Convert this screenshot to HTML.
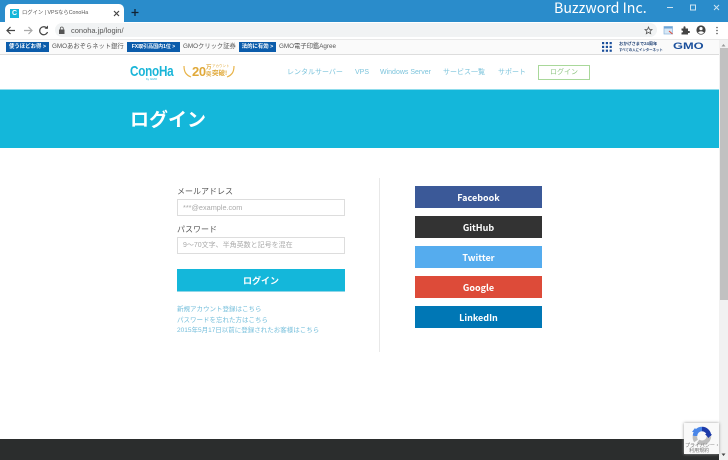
<!DOCTYPE html>
<html lang="ja">
<head>
<meta charset="utf-8">
<title>ログイン | VPSならConoHa</title>
<style>
html,body{margin:0;padding:0;width:728px;height:460px;overflow:hidden;background:#fff}
body{position:relative;font-family:"Liberation Sans","Noto Sans CJK JP",sans-serif}
.a{position:absolute;white-space:nowrap}
.b{position:absolute}
.bk{position:absolute;top:42px;height:10px;background:#0b5cab;color:#fff;font-size:5.400px;line-height:10px;text-align:center;font-weight:bold;white-space:nowrap;overflow:hidden}
.bt{position:absolute;top:41px;font-size:6.300px;line-height:12px;color:#555;white-space:nowrap}
.nav{position:absolute;top:67px;font-size:7px;line-height:12px;color:#7cc4dc;white-space:nowrap}
.sb{position:absolute;left:415px;width:127px;height:22px;color:#fff;font:bold 9px/24px "Noto Sans CJK JP",sans-serif;text-align:center}
.lb{position:absolute;left:177px;font-size:8px;line-height:12px;color:#555;white-space:nowrap}
.inp{position:absolute;left:177px;width:166px;height:15px;border:1px solid #ddd;background:#fff;line-height:15px;color:#aaa;text-indent:5px;white-space:nowrap;overflow:hidden}
.lk{position:absolute;left:177px;font-size:6.500px;line-height:10px;color:#73bedb;white-space:nowrap}
</style>
</head>
<body>
<!-- browser chrome -->
<div class="b" style="left:0;top:0;width:728px;height:22px;background:#2a8ccb"></div>
<div class="b" style="left:5px;top:4px;width:119px;height:18px;background:#fff;border-radius:5px 5px 0 0"></div>
<div class="b" style="left:10px;top:9px;width:9px;height:9px;background:#14b7da"></div>
<div class="a" style="left:12px;top:9px;color:#fff;font:bold 7px/9px 'Liberation Sans',sans-serif">C</div>
<div class="a" style="left:22px;top:8px;font-size:5.300px;line-height:10px;color:#555">ログイン | VPSならConoHa</div>
<svg class="b" style="left:112px;top:9px" width="10" height="10"><path d="M2 2l5 5M7 2l-5 5" stroke="#444" stroke-width="1.200"/></svg>
<svg class="b" style="left:130px;top:8px" width="10" height="10"><path d="M5 1v7M1.500 4.500h7" stroke="#123" stroke-width="1.300"/></svg>
<div class="a" style="left:554px;top:-1px;color:#fff;font-family:'Noto Sans CJK JP',sans-serif;font-size:14.200px;line-height:18px">Buzzword Inc.</div>
<svg class="b" style="left:664px;top:0" width="64" height="16"><path d="M3 7.500h6" stroke="#cfe4f2" stroke-width="1"/><rect x="26.500" y="5" width="5" height="5" fill="none" stroke="#cfe4f2"/><path d="M50 5l5 5M55 5l-5 5" stroke="#cfe4f2"/></svg>

<div class="b" style="left:0;top:22px;width:728px;height:17px;background:#fff"></div>
<svg class="b" style="left:4px;top:24px" width="50" height="14"><g fill="none" stroke-width="1.200"><path d="M3 6.500h8M6.500 3L3 6.500 6.500 10" stroke="#444"/><path d="M20 6.500h8M24.500 3L28 6.500 24.500 10" stroke="#aaa"/><path d="M43 4.500A4 4 0 1 0 43.500 8" stroke="#444"/></g><path d="M40.500 4.800h3.500V1.500z" fill="#444"/></svg>
<div class="b" style="left:55px;top:23px;width:602px;height:14px;background:#f1f3f4;border-radius:7px"></div>
<svg class="b" style="left:58px;top:26px" width="8" height="9"><rect x="1" y="3.500" width="5.500" height="4.500" fill="#555"/><path d="M2.300 3.500V2.500a1.500 1.500 0 0 1 3 0v1" fill="none" stroke="#555" stroke-width=".8"/></svg>
<div class="a" style="left:71px;top:25px;font-size:7.500px;line-height:11px;color:#555">conoha.jp/login/</div>
<svg class="b" style="left:644px;top:26px" width="9" height="9"><path d="M4.500 1l1 2.400 2.500.2-1.900 1.600.6 2.500-2.200-1.300-2.200 1.300.6-2.500L1 3.600l2.500-.2z" fill="none" stroke="#555" stroke-width=".8"/></svg>
<svg class="b" style="left:663px;top:25px" width="11" height="11"><rect x="1" y="1.500" width="8.500" height="7.500" fill="#d8e8f6" stroke="#8ab4dc" stroke-width=".7"/><rect x="1" y="1.500" width="8.500" height="2" fill="#6ea5d8"/><path d="M6 6l3.500 3" stroke="#e0503c" stroke-width="1.100"/></svg>
<svg class="b" style="left:680px;top:25px" width="10" height="10"><path d="M1.500 3.500h2V2.300a1 1 0 0 1 2 0v1.200h2.500V6h1a1 1 0 0 1 0 2h-1v1.500H1.500V7.500h.5a1 1 0 0 0 0-2h-.5z" fill="#444"/></svg>
<svg class="b" style="left:695px;top:24px" width="12" height="12"><circle cx="6" cy="6" r="4.600" fill="#444"/><circle cx="6" cy="4.600" r="1.600" fill="#fff"/><path d="M3 8.500a3.400 2.400 0 0 1 6 0 3.800 3.800 0 0 1-6 0z" fill="#fff"/></svg>
<svg class="b" style="left:715px;top:26px" width="4" height="9"><g fill="#555"><circle cx="2" cy="1.500" r=".8"/><circle cx="2" cy="4.500" r=".8"/><circle cx="2" cy="7.500" r=".8"/></g></svg>

<!-- GMO bar -->
<div class="b" style="left:0;top:39px;width:728px;height:16px;background:#fafafa;border-top:1px solid #e8e8e8;border-bottom:1px solid #ddd;box-sizing:border-box"></div>
<div class="bk" style="left:6px;width:43px">使うほどお得 &gt;</div>
<div class="bt" style="left:52px">GMOあおぞらネット銀行</div>
<div class="bk" style="left:127px;width:53px;font-size:5px">FX取引高国内1位 &gt;</div>
<div class="bt" style="left:183px">GMOクリック証券</div>
<div class="bk" style="left:239px;width:37px">法的に有効 &gt;</div>
<div class="bt" style="left:279px">GMO電子印鑑Agree</div>
<svg class="b" style="left:602px;top:42px" width="10" height="10"><g fill="#1a4f9c"><rect x="0" y="0" width="2.200" height="2.200"/><rect x="3.800" y="0" width="2.200" height="2.200"/><rect x="7.600" y="0" width="2.200" height="2.200"/><rect x="0" y="3.800" width="2.200" height="2.200"/><rect x="3.800" y="3.800" width="2.200" height="2.200"/><rect x="7.600" y="3.800" width="2.200" height="2.200"/><rect x="0" y="7.600" width="2.200" height="2.200"/><rect x="3.800" y="7.600" width="2.200" height="2.200"/><rect x="7.600" y="7.600" width="2.200" height="2.200"/></g></svg>
<div class="a" style="left:619px;top:41px;font-size:4.200px;line-height:6px;color:#1d3f73;font-weight:bold">おかげさまで24周年</div>
<div class="a" style="left:619px;top:47px;font-size:3.400px;line-height:6px;color:#1d3f73;font-weight:bold">すべての人にインターネット</div>
<div class="a" style="left:673px;top:41px;font-size:9.500px;line-height:12px;color:#1a4f9c;font-weight:bold;transform:scaleX(1.350);transform-origin:left">GMO</div>

<!-- header -->
<div class="a" style="left:130px;top:62px;font-size:15px;line-height:20px;color:#19b5d8;font-weight:bold;letter-spacing:-.3px;transform:scaleX(.78);transform-origin:left">ConoHa</div>
<div class="a" style="left:146px;top:77px;font-size:3px;line-height:4px;color:#19b5d8">by GMO</div>
<svg class="b" style="left:183px;top:64px" width="52" height="16"><g fill="none" stroke="#e8b44a" stroke-width="1.200"><path d="M1 2c0 6 2 9 7 11"/><path d="M51 2c0 6-2 9-7 11"/></g></svg>
<div class="a" style="left:192px;top:64px;font-size:13px;line-height:15px;color:#e0a93a;font-weight:bold;letter-spacing:-.3px">20</div>
<div class="a" style="left:206px;top:65px;font-size:5.500px;line-height:6.500px;color:#e0a93a;font-weight:bold">万<br>突</div>
<div class="a" style="left:212px;top:64px;font-size:3.500px;line-height:5px;color:#e0a93a">アカウント</div>
<div class="a" style="left:212px;top:70px;font-size:6.500px;line-height:8px;color:#e0a93a;font-weight:bold">突破!</div>
<div class="nav" style="left:287px">レンタルサーバー</div>
<div class="nav" style="left:355px">VPS</div>
<div class="nav" style="left:380px">Windows Server</div>
<div class="nav" style="left:443px">サービス一覧</div>
<div class="nav" style="left:498px">サポート</div>
<div class="a" style="left:538px;top:65px;width:50px;height:13px;border:1px solid #a9d89a;font-size:7px;line-height:14px;text-align:center;color:#8fc583">ログイン</div>

<!-- hero -->
<div class="b" style="left:0;top:89px;width:719px;height:59px;background:#14b7da;border-top:1px solid #8fdcec;box-sizing:border-box"></div>
<div class="a" style="left:130px;top:108px;font-size:19px;line-height:25px;color:#fff;font-weight:bold">ログイン</div>

<!-- form -->
<div class="lb" style="left:177px;top:186px">メールアドレス</div>
<div class="inp" style="top:199px;font-size:7.300px">***@example.com</div>
<div class="lb" style="top:224px">パスワード</div>
<div class="inp" style="top:237px;font-size:7px">9～70文字、半角英数と記号を混在</div>
<div class="b" style="left:177px;top:269px;width:168px;height:22px;background:#14b7da;border-bottom:1px solid #8fd6e8"></div>
<div class="a" style="left:177px;top:274px;width:168px;text-align:center;color:#fff;font-size:9px;line-height:14px;font-weight:bold">ログイン</div>
<div class="lk" style="top:305px">新規アカウント登録はこちら</div>
<div class="lk" style="top:316px">パスワードを忘れた方はこちら</div>
<div class="lk" style="top:326px">2015年5月17日以前に登録されたお客様はこちら</div>
<div class="b" style="left:379px;top:178px;width:1px;height:174px;background:#e8e8e8"></div>

<!-- social -->
<div class="sb" style="top:186px;background:#3b5998">Facebook</div>
<div class="sb" style="top:216px;background:#333">GitHub</div>
<div class="sb" style="top:246px;background:#55acee">Twitter</div>
<div class="sb" style="top:276px;background:#dd4b39">Google</div>
<div class="sb" style="top:306px;background:#0077b5">LinkedIn</div>

<!-- footer -->
<div class="b" style="left:0;top:439px;width:719px;height:21px;background:#2b2d2d"></div>

<!-- scrollbar -->
<div class="b" style="left:719px;top:40px;width:9px;height:420px;background:#f1f1f1"></div>
<div class="b" style="left:720px;top:48px;width:8px;height:252px;background:#c1c1c1"></div>
<svg class="b" style="left:721px;top:43px" width="5" height="4"><path d="M.5 3.500L2.500 1l2 2.500z" fill="#999"/></svg>
<svg class="b" style="left:721px;top:453px" width="5" height="4"><path d="M.5.500L2.500 3l2-2.500z" fill="#444"/></svg>

<!-- recaptcha -->
<div class="b" style="left:684px;top:423px;width:35px;height:31px;background:#f9f9f9;box-shadow:0 0 3px #999"></div>
<svg class="b" style="left:691px;top:425px" width="22" height="22"><g fill="none" stroke-width="4.500"><path d="M4 11a7 7 0 0 1 7-7" stroke="#4a86e8"/><path d="M11 4a7 7 0 0 1 7 7" stroke="#1c3aa9"/><path d="M18 11a7 7 0 0 1-11 5.500" stroke="#bdbdbd"/><path d="M5 16a7 7 0 0 1-1-5" stroke="#bdbdbd"/></g><path d="M14 9h7l-3.500 4z" fill="#1c3aa9"/><path d="M1 7l3-4 3 4z" fill="#4a86e8"/></svg>
<div class="a" style="left:685px;top:444px;font-size:5px;line-height:5px;color:#777">プライバシー・<br>&nbsp;&nbsp;&nbsp;利用規約</div>
</body>
</html>
